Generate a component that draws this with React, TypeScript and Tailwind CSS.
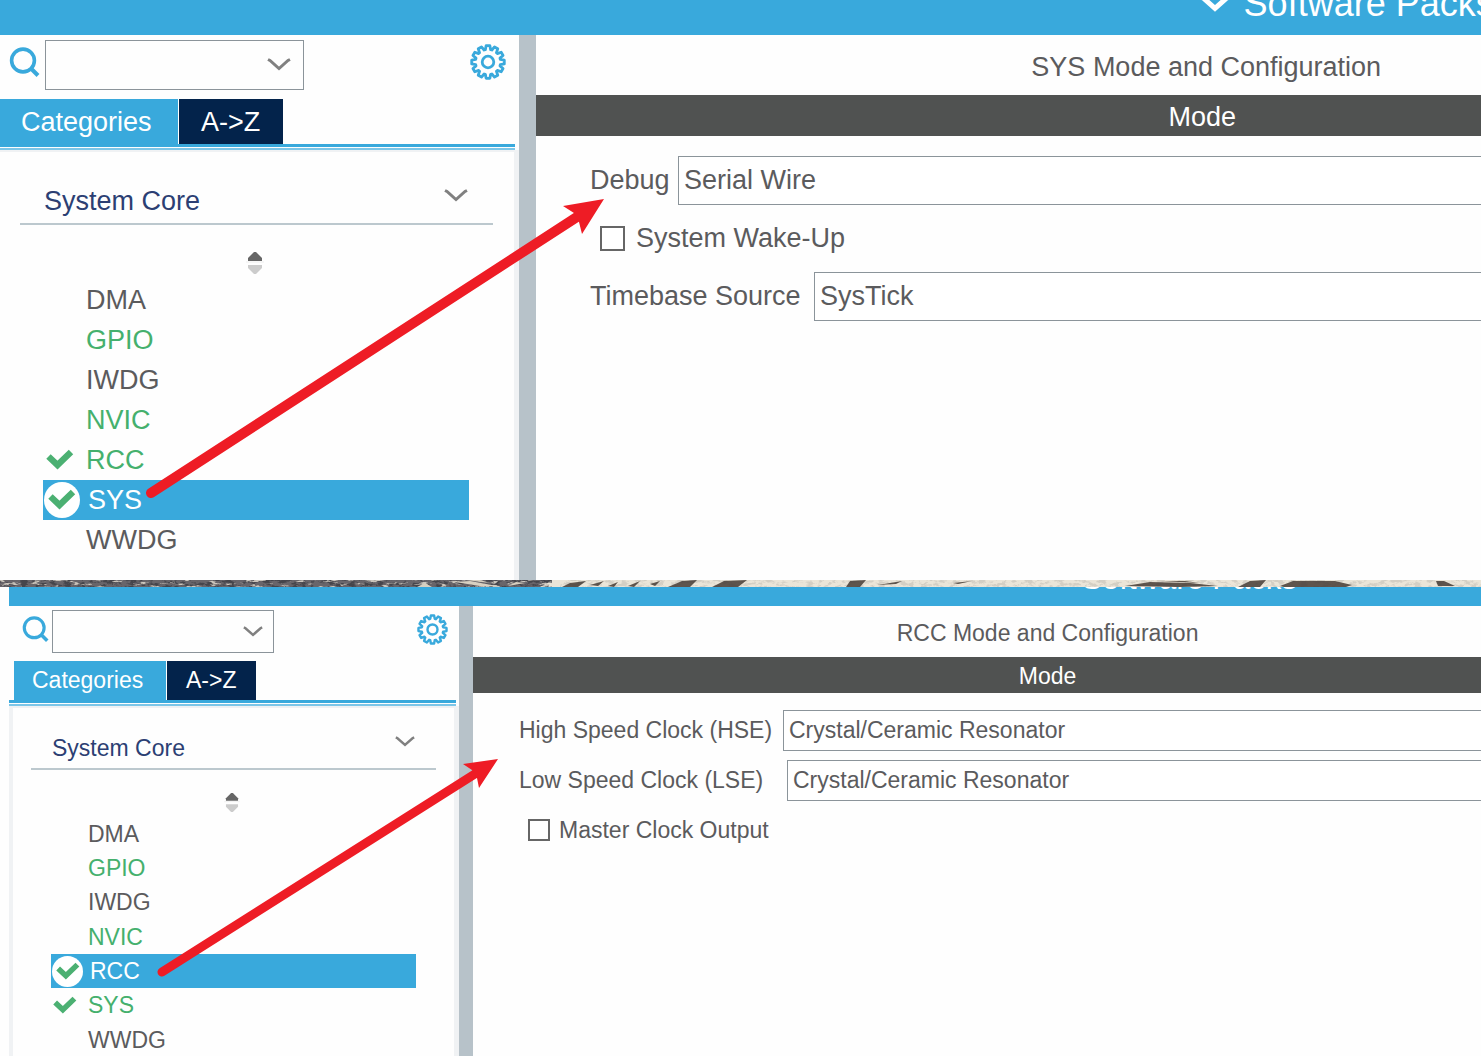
import React from "react";

type Size = "lg" | "md";
type Field =
  | { kind: "select"; label: string; value: string; labelWidth: string }
  | { kind: "check"; label: string };
type Item = { name: string; tone: "plain" | "used"; checked?: boolean };

const styles = {
  lg: {
    header: "h-[35px] pl-[81%] pb-[11px]",
    headerText: "gap-[14px] text-[36px]",
    headerChevron: "w-[30px] h-[18px]",
    side: "w-[519px]",
    toolbar: "h-[64px] pl-[9px] pr-[13px] pt-[5px]",
    search: "w-[31px] h-[31px] mt-[7px] mr-[5px]",
    combo: "w-[259px] h-[50px] pr-[12px]",
    gear: "w-[36px] h-[36px] mt-[4px]",
    chevron: "w-[24px] h-[14px]",
    tabs: "pl-0",
    tab: "h-[45px] pt-[2px] text-[27px]",
    tabOne: "w-[178px] pl-[21px]",
    tabTwo: "w-[104px] pl-[22px]",
    box: "mr-[4px]",
    tree: "border-r-[5px] pt-[24px] pb-[20px]",
    section: "h-[49px] ml-[20px] mr-[21px] pl-[24px] pr-[25px] pt-[4px] text-[27px]",
    spinner: "w-[18px] h-[22px] mt-[27px] mb-[6px] ml-[246px]",
    list: "h-[280px] ml-[43px] mr-[45px] text-[27px]",
    slot: "w-[43px]",
    slotActive: "w-[45px]",
    check: "w-[28px] h-[22px] ml-[3px]",
    disc: "w-[36px] h-[36px] ml-[1px]",
    discCheck: "w-[28px] h-[22px]",
    divider: "w-[17px]",
    wide: "w-[141%]",
    title: "h-[60px] pt-[4px] pl-[8px] text-[27px]",
    mode: "h-[41px] pt-[4px] text-[27px]",
    form: "pl-[54px] pt-[20px] gap-[10px] text-[27px]",
    row: "h-[49px] gap-[8px]",
    field: "h-[49px]",
    checkRow: "h-[47px] pl-[10px] gap-[11px]",
    checkbox: "w-[25px] h-[25px]",
  },
  md: {
    header: "h-[19px] pl-[70%] pb-[7px]",
    headerText: "gap-[16px] text-[31px]",
    headerChevron: "w-[26px] h-[16px]",
    side: "w-[450px]",
    toolbar: "h-[55px] pl-[13px] pr-[11px] pt-[4px]",
    search: "w-[27px] h-[27px] mt-[6px] mr-[3px]",
    combo: "w-[222px] h-[43px] pr-[10px]",
    gear: "w-[31px] h-[31px] mt-[4px]",
    chevron: "w-[20px] h-[12px]",
    tabs: "pl-[5px]",
    tab: "h-[39px] text-[23px]",
    tabOne: "w-[152px] pl-[18px]",
    tabTwo: "w-[89px] pl-[19px]",
    box: "mr-[3px]",
    tree: "border-l-[4px] border-r-[5px] pt-[20px]",
    section: "h-[42px] ml-[18px] mr-[18px] pl-[21px] pr-[21px] text-[23px]",
    spinner: "w-[16px] h-[19px] mt-[23px] mb-[5px] ml-[211px]",
    list: "h-[240px] ml-[38px] mr-[38px] text-[23px]",
    slot: "w-[37px]",
    slotActive: "w-[39px]",
    check: "w-[24px] h-[19px] ml-[2px]",
    disc: "w-[31px] h-[31px] ml-[1px]",
    discCheck: "w-[24px] h-[19px]",
    divider: "w-[14px]",
    wide: "w-[114%]",
    title: "h-[51px] pt-[3px] text-[23px]",
    mode: "h-[36px] pt-[2px] text-[23px]",
    form: "pl-[46px] pt-[17px] gap-[9px] text-[23px]",
    row: "h-[41px] gap-[8px]",
    field: "h-[41px]",
    checkRow: "h-[40px] pl-[9px] gap-[9px]",
    checkbox: "w-[22px] h-[22px]",
  },
};

function Chevron({ className, width = 2 }: { className: string; width?: number }) {
  return (
    <svg viewBox="0 0 24 14" className={className} fill="none" stroke="currentColor" strokeWidth={width} aria-hidden="true">
      <path d="M1 1.5 L3 2.5 L12 10.5 L21 2.5 L23 1.5" />
    </svg>
  );
}

function SearchIcon({ className }: { className: string }) {
  return (
    <svg viewBox="0 0 31 31" className={className} fill="none" stroke="#39a9dc" aria-hidden="true">
      <circle cx="14" cy="13.5" r="11.4" strokeWidth="3.6" />
      <path d="M21.5 21 L29 28.5" strokeWidth="4" />
    </svg>
  );
}

function GearIcon({ className }: { className: string }) {
  const teeth = 12;
  const points: string[] = [];
  for (let i = 0; i < teeth; i++) {
    [
      [-0.4, 12.6],
      [-0.22, 16.4],
      [0.22, 16.4],
      [0.4, 12.6],
    ].forEach(([shift, r]) => {
      const a = ((i + shift) / teeth) * Math.PI * 2 - Math.PI / 2;
      points.push(`${(18 + r * Math.cos(a)).toFixed(2)},${(18 + r * Math.sin(a)).toFixed(2)}`);
    });
  }
  return (
    <svg viewBox="0 0 36 36" className={className} fill="none" stroke="#39a9dc" aria-hidden="true">
      <polygon points={points.join(" ")} strokeWidth="2.8" strokeLinejoin="round" />
      <circle cx="18" cy="18" r="5.8" strokeWidth="2.8" />
    </svg>
  );
}

function Check({ className }: { className: string }) {
  return (
    <svg viewBox="0 0 28 22" className={className} fill="none" stroke="#4bb072" strokeWidth="6.4" aria-hidden="true">
      <path d="M2.5 7.5 L11.5 16 L25 3" strokeLinejoin="miter" />
    </svg>
  );
}

function SortHandle({ className }: { className: string }) {
  return (
    <svg viewBox="0 0 18 22" className={className} aria-hidden="true">
      <path d="M8 0 H10 L16 6 V9 H2 V6 Z" fill="#666" />
      <path d="M0 10 H18" stroke="#eee" />
      <path d="M8 22 H10 L16 16 V13 H2 V16 Z" fill="#ccc" />
    </svg>
  );
}

function Panel({ size, name, items, active, fields }: { size: Size; name: string; items: Item[]; active: string; fields: Field[] }) {
  const s = styles[size];
  return (
    <section className="flex flex-col bg-[#fefefe]">
      <header className={`flex items-end overflow-hidden bg-[#39a9dc] ${s.header}`}>
        <button className={`flex shrink-0 items-center whitespace-nowrap leading-[40px] text-white ${s.headerText}`}>
          <Chevron className={s.headerChevron} width={4} />
          Software Packs
        </button>
      </header>
      <div className="flex">
        <aside className={`shrink-0 ${s.side}`}>
          <div className={`flex items-start ${s.toolbar}`}>
            <SearchIcon className={`shrink-0 ${s.search}`} />
            <div className={`flex items-center border border-[#8b949a] text-[#808080] ${s.combo}`}>
              <input aria-label={`Search ${name}`} className="h-full min-w-0 flex-1 px-2 text-xl outline-none" />
              <button aria-label="Show search history">
                <Chevron className={s.chevron} width={3} />
              </button>
            </div>
            <button aria-label="Settings" className="ml-auto">
              <GearIcon className={s.gear} />
            </button>
          </div>
          <div className={`flex gap-px text-white ${s.tabs}`}>
            <button className={`bg-[#39a9dc] text-left ${s.tab} ${s.tabOne}`}>Categories</button>
            <button className={`bg-[#03234b] text-left ${s.tab} ${s.tabTwo}`}>A-&gt;Z</button>
          </div>
          <div className={`h-[3px] bg-[#39a9dc] ${s.box}`} />
          <div className={`mt-px h-[2px] bg-[#7cc6e8] ${s.box}`} />
          <div className={`border-t-2 border-[#f0f2f4] ${s.tree}`}>
            <div className={`flex items-center border-b-2 border-[#bcc8ce] ${s.section}`}>
              <button className="flex flex-1 items-center justify-between text-[#2c3f73]">
                System Core
                <span className="pb-[12px] text-[#808080]">
                  <Chevron className={s.chevron} width={3} />
                </span>
              </button>
            </div>
            <SortHandle className={s.spinner} />
            <ul className={`flex flex-col ${s.list}`}>
              {items.map((item) => {
                const on = item.name === active;
                return (
                  <li key={item.name} className="flex min-h-0 flex-1">
                    <button
                      className={`flex w-full items-center ${on ? "bg-[#39a9dc] text-white" : item.tone === "used" ? "text-[#45b06d]" : "text-[#5b5b5d]"}`}
                    >
                      <span className={`shrink-0 ${on ? s.slotActive : s.slot}`}>
                        {on ? (
                          <span className={`flex items-center justify-center rounded-full bg-white ${s.disc}`}>
                            <Check className={s.discCheck} />
                          </span>
                        ) : item.checked ? (
                          <Check className={s.check} />
                        ) : null}
                      </span>
                      {item.name}
                    </button>
                  </li>
                );
              })}
            </ul>
          </div>
        </aside>
        <div className={`shrink-0 bg-[#b7c2c9] ${s.divider}`} />
        <main className="min-w-0 flex-1 overflow-hidden text-[#5b5b5d]">
          <div className={s.wide}>
            <h1 className={`flex items-center justify-center ${s.title}`}>{name} Mode and Configuration</h1>
            <h2 className={`flex items-center justify-center bg-[#505251] text-white ${s.mode}`}>Mode</h2>
            <div className={`flex flex-col ${s.form}`}>
              {fields.map((f) => {
                const id = `${name}-${f.label}`;
                return f.kind === "select" ? (
                  <div key={id} className={`flex items-center ${s.row}`}>
                    <label htmlFor={id} className={`shrink-0 whitespace-nowrap ${f.labelWidth}`}>
                      {f.label}
                    </label>
                    <select id={id} className={`min-w-0 flex-1 appearance-none border border-[#8b949a] bg-white pl-[5px] ${s.field}`}>
                      <option>{f.value}</option>
                    </select>
                  </div>
                ) : (
                  <div key={id} className={`flex items-center ${s.checkRow}`}>
                    <input id={id} type="checkbox" className={`appearance-none border-2 border-[#666] bg-white ${s.checkbox}`} />
                    <label htmlFor={id}>{f.label}</label>
                  </div>
                );
              })}
            </div>
          </div>
        </main>
      </div>
    </section>
  );
}

function RockStrip() {
  return (
    <svg viewBox="0 0 1481 7" preserveAspectRatio="none" className="block h-[7px] w-full" aria-hidden="true">
      <defs>
        <filter id="shade" x="0" y="0" width="100%" height="100%">
          <feTurbulence type="fractalNoise" baseFrequency="0.14 0.3" numOctaves="4" seed="4" />
          <feColorMatrix values="0 0 0 0 0.04  0 0 0 0 0.04  0 0 0 0 0.05  6 0 0 0 -2.8" />
        </filter>
        <filter id="glint" x="0" y="0" width="100%" height="100%">
          <feTurbulence type="fractalNoise" baseFrequency="0.1 0.35" numOctaves="4" seed="11" />
          <feColorMatrix values="0 0 0 0 0.6  0 0 0 0 0.56  0 0 0 0 0.5  6 0 0 0 -3.5" />
        </filter>
      </defs>
      <rect width="1481" height="7" fill="#ebe5d8" />
      <path d="M0 0 H552 L540 7 H0 Z" fill="#69656a" />
      <path d="M0 0 H552 L540 7 H0 Z" filter="url(#shade)" opacity="0.7" />
      <path d="M0 0 H552 L540 7 H0 Z" filter="url(#glint)" />
      <path d="M417 7 L425 3 L432 7 Z M455 2 L470 1 L497 6 L480 6 Z M466 0 H480 L490 3 Z M508 6 L516 2 L525 3 Z" fill="#d8d0c1" />
      <path
        d="M562 7 L570 3 L586 1 L578 7 Z M590 5 L604 1 L598 6 Z M608 6 L618 2 L614 7 Z M628 6 L640 1 L634 7 Z M650 4 L660 1 L655 6 Z M668 7 L682 1 L697 0 L690 7 Z M712 7 L724 1 L747 0 L738 7 Z M846 7 L850 1 L866 0 L860 7 Z M877 5 L890 3 L902 1 L896 4 Z M953 3 L972 1 L958 4 Z M1125 6 L1150 2 L1190 3 L1218 6 L1180 7 Z M1160 1 L1185 1 L1200 3 Z M1238 7 L1250 1 L1266 0 L1260 7 Z M1280 6 L1293 1 L1335 1 L1352 5 L1346 7 H1284 Z M1436 1 L1444 1 L1455 6 L1438 6 Z"
        fill="#5f554d"
      />
      <rect x="560" width="921" height="7" filter="url(#shade)" opacity="0.12" />
    </svg>
  );
}

const peripherals: Item[] = [
  { name: "DMA", tone: "plain" },
  { name: "GPIO", tone: "used" },
  { name: "IWDG", tone: "plain" },
  { name: "NVIC", tone: "used" },
  { name: "RCC", tone: "used", checked: true },
  { name: "SYS", tone: "used", checked: true },
  { name: "WWDG", tone: "plain" },
];

export default function App() {
  return (
    <div className="relative overflow-hidden bg-[#fefefe] font-['Liberation_Sans',Arial,sans-serif]">
      <Panel
        size="lg"
        name="SYS"
        items={peripherals}
        active="SYS"
        fields={[
          { kind: "select", label: "Debug", value: "Serial Wire", labelWidth: "w-[80px]" },
          { kind: "check", label: "System Wake-Up" },
          { kind: "select", label: "Timebase Source", value: "SysTick", labelWidth: "w-[216px]" },
        ]}
      />
      <RockStrip />
      <div className="pl-[9px]">
        <Panel
          size="md"
          name="RCC"
          items={peripherals}
          active="RCC"
          fields={[
            { kind: "select", label: "High Speed Clock (HSE)", value: "Crystal/Ceramic Resonator", labelWidth: "w-[256px]" },
            { kind: "select", label: "Low Speed Clock (LSE)", value: "Crystal/Ceramic Resonator", labelWidth: "w-[260px]" },
            { kind: "check", label: "Master Clock Output" },
          ]}
        />
      </div>
      <svg width="620" height="1000" viewBox="0 0 620 1000" className="pointer-events-none absolute left-0 top-0" fill="#ee1c25" stroke="#ee1c25" aria-hidden="true">
        <path d="M151 493 L580 215" strokeWidth="10" strokeLinecap="round" />
        <path d="M604 199 L563 206 L574 213 L579 222 L582 234 Z" stroke="none" />
        <path d="M162 972 L478 772" strokeWidth="9" strokeLinecap="round" />
        <path d="M498 759 L463 764 L472 770 L477 778 L479 788 Z" stroke="none" />
      </svg>
    </div>
  );
}
